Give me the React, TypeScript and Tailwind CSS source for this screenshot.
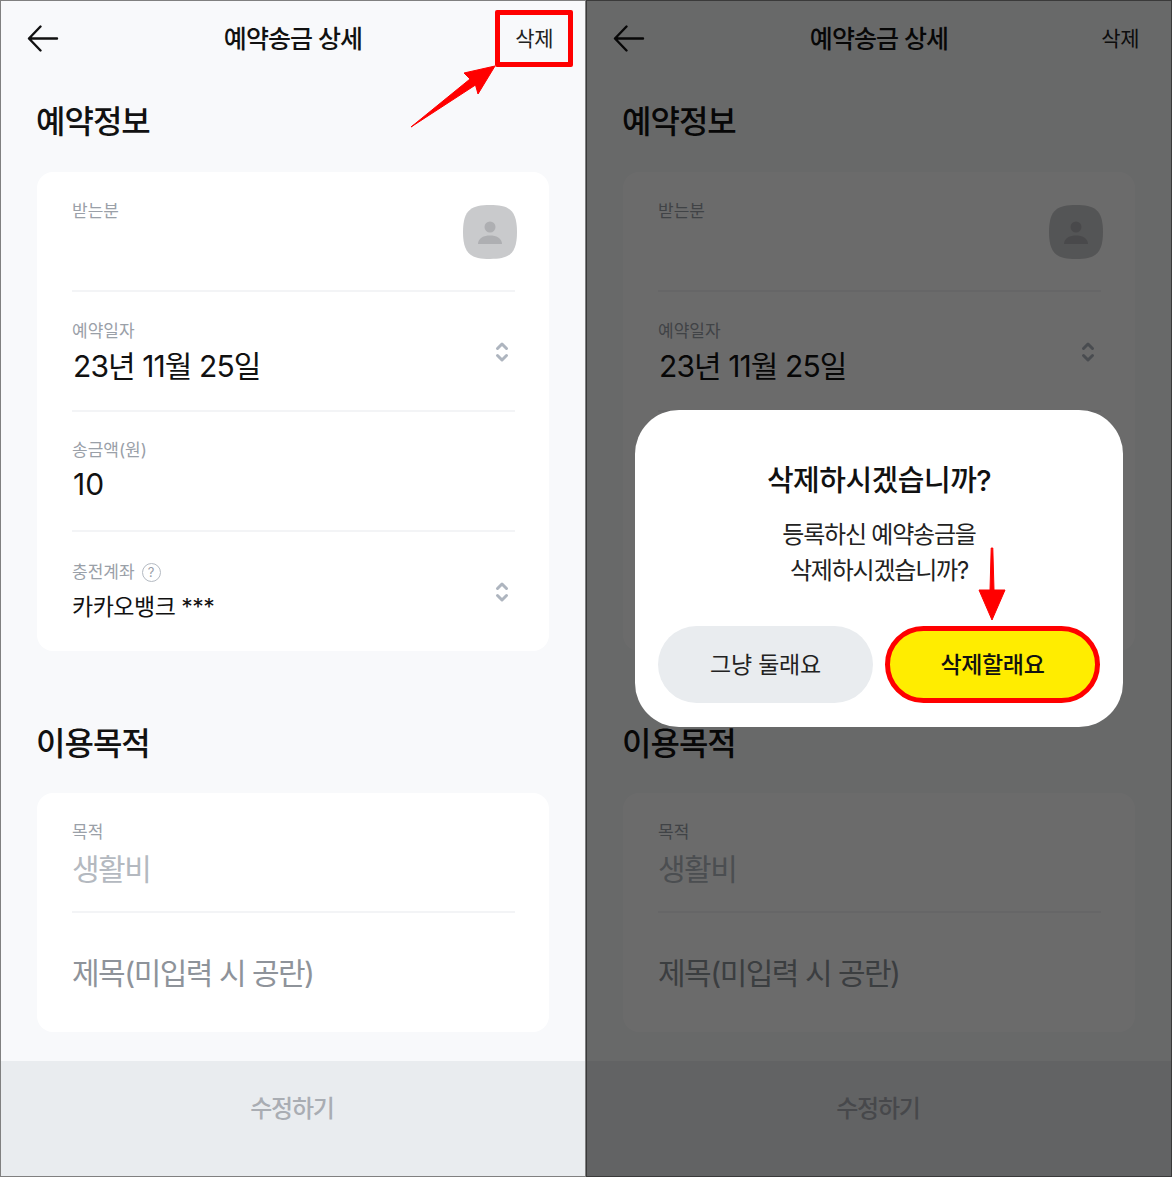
import React from 'react';

const font = '[font-family:"Inter","Noto_Sans_CJK_KR","Noto_Sans",sans-serif]';

function BackArrow() {
  return (
    <svg width="32" height="28" viewBox="0 0 32 28" fill="none" stroke="#111" strokeWidth="2.4" strokeLinecap="round" strokeLinejoin="round">
      <path d="M30 13.5H2M13.5 1.5L2 13.5L13.5 25.5" />
    </svg>
  );
}

function UpDown() {
  return (
    <svg width="14" height="22" viewBox="0 0 14 22" fill="none" stroke="#aeb5bf" strokeWidth="3" strokeLinecap="round" strokeLinejoin="round">
      <path d="M2.5 7.5L7 3L11.5 7.5M2.5 14.5L7 19L11.5 14.5" />
    </svg>
  );
}

function Avatar() {
  return (
    <svg width="54" height="54" viewBox="0 0 54 54">
      <path d="M27 0C45 0 54 4 54 27C54 50 45 54 27 54C9 54 0 50 0 27C0 4 9 0 27 0Z" fill="#c9cacc" />
      <circle cx="27" cy="22" r="5.5" fill="#aeafb2" />
      <path d="M15 39C15 33 21 30.5 27 30.5C33 30.5 39 33 39 39Z" fill="#aeafb2" />
    </svg>
  );
}

function Label({ children }: { children: React.ReactNode }) {
  return <div className="text-[17px] leading-[22px] text-[#9aa0a8]">{children}</div>;
}

function Divider() {
  return <div className="h-[2px] bg-[#f3f4f6]" />;
}

function Screen() {
  return (
    <div className="flex h-full flex-col">
      <header className="relative flex h-[77px] shrink-0 items-center justify-between pl-[27px] pr-[33px]">
        <BackArrow />
        <h1 className="absolute left-0 right-0 top-[23px] text-center text-[25px] leading-[32px] font-medium tracking-[-0.9px] text-[#111]">예약송금 상세</h1>
        <span className="text-[21px] leading-[28px] tracking-[-0.5px] text-[#222]">삭제</span>
      </header>

      <section className="px-[37px]">
        <h2 className="mt-[22px] -ml-px text-[32px] leading-[46px] font-medium tracking-[-1px] text-[#111]">예약정보</h2>
        <div className="mt-[27px] h-[479px] rounded-[16px] bg-white pl-[35px] pr-[34px]">
          <div className="flex h-[118px] items-start justify-between pt-[28px]">
            <Label>받는분</Label>
            <div className="mt-[5px] mr-[-2px]"><Avatar /></div>
          </div>
          <Divider />
          <div className="flex h-[118px] items-center justify-between pr-[6px] pt-[2px]">
            <div>
              <Label>예약일자</Label>
              <div className="mt-[5px] ml-px text-[30px] leading-[38px] tracking-[-0.9px] text-[#111]">23년 11월 25일</div>
            </div>
            <UpDown />
          </div>
          <Divider />
          <div className="flex h-[118px] flex-col justify-center">
            <Label>송금액(원)</Label>
            <div className="mt-[4px] ml-px text-[30px] leading-[38px] text-[#111]">10</div>
          </div>
          <Divider />
          <div className="flex h-[121px] items-center justify-between pr-[6px] pb-[1px]">
            <div>
              <div className="flex items-center gap-[7px]">
                <Label>충전계좌</Label>
                <span className="flex h-[19px] w-[19px] items-center justify-center rounded-full border border-[#b4bac2] text-[13px] leading-none text-[#9aa0a8]">?</span>
              </div>
              <div className="mt-[8px] text-[23px] leading-[32px] tracking-[-0.5px] text-[#111]">카카오뱅크 ***</div>
            </div>
            <UpDown />
          </div>
        </div>

        <h2 className="mt-[70px] -ml-px text-[32px] leading-[46px] font-medium tracking-[-1px] text-[#111]">이용목적</h2>
        <div className="mt-[26px] h-[239px] rounded-[16px] bg-white pl-[35px] pr-[34px]">
          <div className="h-[118px] pt-[28px]">
            <Label>목적</Label>
            <div className="mt-[7px] text-[30px] leading-[38px] tracking-[-1.5px] text-[#b4b9c0]">생활비</div>
          </div>
          <Divider />
          <div className="flex h-[119px] items-center text-[30px] leading-[38px] tracking-[-1.5px] text-[#8e939a]">제목(미입력 시 공란)</div>
        </div>
      </section>

      <footer className="mt-auto flex h-[116px] shrink-0 items-center justify-center bg-[#e9ecef] pr-[2px] pb-[21px] text-[24px] font-medium tracking-[-1.2px] text-[#a9adb3]">
        수정하기
      </footer>
    </div>
  );
}

function ConfirmDialog() {
  return (
    <div className="absolute left-[49px] top-[410px] h-[317px] w-[488px] rounded-[44px] bg-white px-[23px] pt-[49px]">
      <h3 className="text-center text-[29px] leading-[44px] font-medium tracking-[-0.5px] text-[#111]">삭제하시겠습니까?</h3>
      <p className="mt-[14px] text-center text-[24px] leading-[36px] tracking-[-1.2px] text-[#222]">
        등록하신 예약송금을<br />삭제하시겠습니까?
      </p>
      <div className="mt-[37px] flex gap-[12px]">
        <button className="h-[77px] w-[215px] rounded-full bg-[#e9ecef] pt-[2px] text-[23px] tracking-[-0.2px] text-[#222]">그냥 둘래요</button>
        <button className="h-[77px] w-[215px] rounded-full border-[5px] border-[#ff0000] bg-[#ffed00] pt-[2px] text-[23px] font-medium tracking-[-0.4px] text-[#111]">삭제할래요</button>
      </div>
      <svg className="absolute left-[342px] top-[137px]" width="30" height="76" viewBox="0 0 30 76">
        <path d="M14.2 1H15.8L17 43L28 43L15 73L2 43L13 43Z" fill="#ff0000" stroke="#ff0000" strokeWidth="1" strokeLinejoin="round" />
      </svg>
    </div>
  );
}

export default function App() {
  return (
    <div className={`flex h-[1177px] w-[1172px] overflow-hidden bg-[#6e6e6e] ${font}`}>
      <div className="relative h-full w-[586px] bg-[#f8f9fb]">
        <Screen />
        <div className="absolute inset-0 border border-[#808080]" />
        <div className="absolute left-[495px] top-[10px] h-[57px] w-[78px] rounded-[2px] border-[5px] border-[#ff0000]" />
        <svg className="absolute left-[410px] top-[64px]" width="90" height="66" viewBox="0 0 90 66">
          <path d="M1 63L60 15L54 9L85 2L68 30L65.5 21Z" fill="#ff0000" stroke="#ff0000" strokeWidth="1" strokeLinejoin="round" />
        </svg>
      </div>
      <div className="relative h-full w-[586px] bg-[#f8f9fb]">
        <Screen />
        <div className="absolute inset-0 bg-black/[0.58]" />
        <div className="absolute inset-0 border border-[#3a3a3a]" />
        <ConfirmDialog />
      </div>
    </div>
  );
}
